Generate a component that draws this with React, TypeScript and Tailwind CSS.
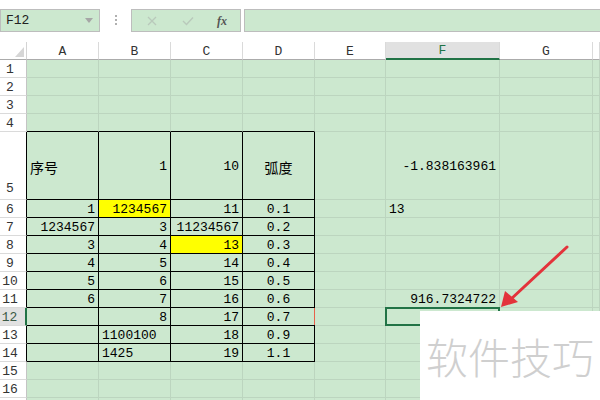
import React from 'react';

type Align = 'l' | 'r' | 'c';
type Cell = { v: string; a?: Align; y?: boolean };

const cols = ['A', 'B', 'C', 'D', 'E', 'F', 'G', ''];

// table A5:D14
const table: Cell[][] = [
    [{ v: '序号', a: 'l' }, { v: '1' }, { v: '10' }, { v: '弧度', a: 'c' }],
    [{ v: '1' }, { v: '1234567', y: true }, { v: '11' }, { v: '0.1', a: 'c' }],
    [{ v: '1234567' }, { v: '3' }, { v: '11234567' }, { v: '0.2', a: 'c' }],
    [{ v: '3' }, { v: '4' }, { v: '13', y: true }, { v: '0.3', a: 'c' }],
    [{ v: '4' }, { v: '5' }, { v: '14' }, { v: '0.4', a: 'c' }],
    [{ v: '5' }, { v: '6' }, { v: '15' }, { v: '0.5', a: 'c' }],
    [{ v: '6' }, { v: '7' }, { v: '16' }, { v: '0.6', a: 'c' }],
    [{ v: '' }, { v: '8' }, { v: '17' }, { v: '0.7', a: 'c' }],
    [{ v: '' }, { v: '1100100', a: 'l' }, { v: '18' }, { v: '0.9', a: 'c' }],
    [{ v: '' }, { v: '1425', a: 'l' }, { v: '19' }, { v: '1.1', a: 'c' }],
];

const fCol: Record<number, Cell> = {
    5: { v: '-1.838163961' },
    6: { v: '13', a: 'l' },
    11: { v: '916.7324722' },
};

// row 17 only peeks in at the bottom edge, no label shown
const rows = Array.from({ length: 17 }, (_, i) => i + 1);

function getCell(row: number, col: number): Cell | null {
    if (row >= 5 && row <= 14 && col < 4) return table[row - 5][col];
    if (col === 5 && fCol[row]) return fCol[row];
    return null;
}

function SheetCell({ row, col }: { row: number; col: number }) {
    const cell = getCell(row, col);
    const inTable = row >= 5 && row <= 14 && col < 4;
    const blackBottom = row >= 4 && row <= 14 && col < 4;
    const cjk = cell && /[\u4e00-\u9fff]/.test(cell.v);

    return (
        <div
            className={
                'relative flex items-center px-[3px] border-r border-b whitespace-nowrap ' +
                (inTable ? 'border-r-black ' : 'border-r-[#bcd5bf] ') +
                (blackBottom ? 'border-b-black ' : 'border-b-[#bcd5bf] ') +
                (cell?.y ? 'bg-[#ffff00] ' : 'bg-[#cce8cf] ') +
                (cell?.a === 'l' ? 'justify-start ' : cell?.a === 'c' ? 'justify-center ' : 'justify-end ') +
                (cjk ? "text-[14px] font-['Noto_Sans_CJK_SC',sans-serif] " : "text-[13px] font-['Liberation_Mono',monospace] ")
            }
        >
            {cell && <span className="pt-[3px]">{cell.v}</span>}
            {row === 12 && col === 3 && (
                <span className="absolute right-[-2px] top-0 bottom-0 w-[2px] bg-[#e7614b]" />
            )}
            {row === 12 && col === 5 && (
                <span className="absolute -left-px -top-px right-[-1px] bottom-[-1px] border-2 border-[#217346]" />
            )}
        </div>
    );
}

export default function App() {
    return (
        <div className="relative w-[600px] h-[400px] overflow-hidden bg-white text-black">
            {/* formula bar */}
            <div className="h-[42px] flex items-start pt-[9px] bg-white">
                <div className="w-[100px] h-[23px] bg-[#cce8cf] border border-[#bdbdbd] flex items-center pl-[5px] pr-[6px] justify-between">
                    <span className="text-[13px] font-['Liberation_Mono',monospace] text-[#222] pt-[1px]">F12</span>
                    <svg width="8" height="5" viewBox="0 0 8 5"><path d="M0 0h8L4 5z" fill="#a6a6a6" /></svg>
                </div>
                <div className="w-[31px] flex flex-col items-center gap-[2px] pt-[6px]">
                    <span className="w-[2px] h-[2px] bg-[#b0b0b0]" />
                    <span className="w-[2px] h-[2px] bg-[#b0b0b0]" />
                    <span className="w-[2px] h-[2px] bg-[#b0b0b0]" />
                </div>
                <div className="w-[110px] h-[23px] bg-[#cce8cf] border border-[#bdbdbd] flex items-center">
                    <svg className="ml-[15px]" width="10" height="10" viewBox="0 0 10 10">
                        <path d="M1 1l8 8M9 1l-8 8" stroke="#b9c9bb" strokeWidth="1.3" />
                    </svg>
                    <svg className="ml-[25px]" width="12" height="10" viewBox="0 0 12 10">
                        <path d="M1 5l3.5 3.5L11 1.5" stroke="#b9c9bb" strokeWidth="1.4" fill="none" />
                    </svg>
                    <span className="ml-[23px] text-[12px] italic font-['Liberation_Serif',serif] text-[#555] font-bold">fx</span>
                </div>
                <div className="ml-[3px] flex-1 h-[23px] bg-[#cce8cf] border border-r-0 border-[#bdbdbd]" />
            </div>

            {/* sheet */}
            <div className="grid grid-cols-[27px_72px_72px_72px_72px_71px_114px_93px_1fr] grid-rows-[18px_18px_18px_18px_18px_68px_repeat(12,18px)]">
                {/* header row */}
                <div className="relative bg-white border-r border-b border-r-[#d4d4d4] border-b-[#ababab]">
                    <svg className="absolute right-[2px] bottom-[2px]" width="9" height="10" viewBox="0 0 9 10">
                        <path d="M9 0v10H0z" fill="#d6d6d6" />
                    </svg>
                </div>
                {cols.map((c, i) => (
                    <div
                        key={c + i}
                        className={
                            "flex items-center justify-center pt-[2px] text-[13px] font-['Liberation_Mono',monospace] border-r border-r-[#dadada] " +
                            (c === 'F'
                                ? 'bg-[#e1e1e1] text-[#217346] border-b-2 border-b-[#217346]'
                                : 'bg-white text-[#333] border-b border-b-[#ababab]')
                        }
                    >
                        {c}
                    </div>
                ))}

                {rows.map((r) => (
                    <React.Fragment key={r}>
                        <div
                            className={
                                "flex justify-center pr-[6px] text-[13px] font-['Liberation_Mono',monospace] border-b border-b-[#dadada] " +
                                (r === 5 ? 'items-end pb-[1px] ' : 'items-center pt-[2px] ') +
                                (r === 12
                                    ? 'bg-[#e1e1e1] text-[#3c5a46] border-r-2 border-r-[#217346]'
                                    : r >= 5 && r <= 14
                                    ? 'bg-white text-[#333] border-r border-r-black'
                                    : 'bg-white text-[#333] border-r border-r-[#c4c4c4]')
                            }
                        >
                            {r < 17 ? r : ''}
                        </div>
                        {cols.map((_, ci) => (
                            <SheetCell key={ci} row={r} col={ci} />
                        ))}
                    </React.Fragment>
                ))}
            </div>

            {/* red arrow */}
            <svg className="absolute left-0 top-0 pointer-events-none" width="600" height="400" viewBox="0 0 600 400">
                <line x1="567" y1="247" x2="510" y2="300" stroke="#e3333b" strokeWidth="3" strokeLinecap="round" />
                <path d="M501 307L505 291L518 302Z" fill="#e3333b" />
            </svg>

            {/* watermark */}
            <div className="absolute left-[420px] top-[311px] w-[180px] h-[89px] bg-white flex items-center pl-[6px]">
                <span className="text-[42px] leading-none text-[#cfcfcf] font-['Noto_Sans_CJK_SC',sans-serif] font-light">
                    软件技巧
                </span>
            </div>
        </div>
    );
}
